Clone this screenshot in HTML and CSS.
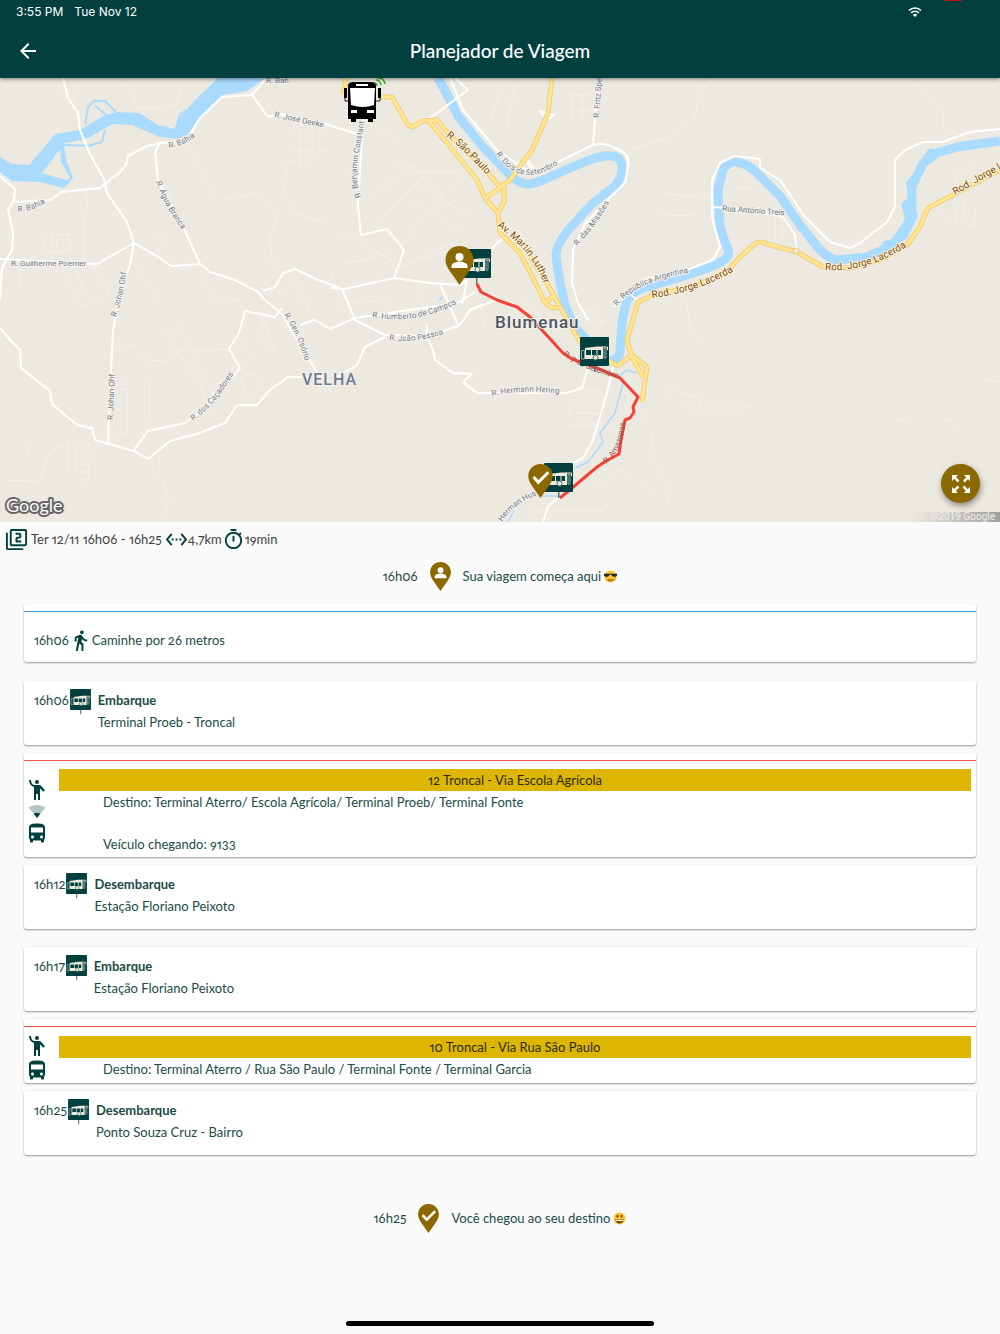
FILE: index.html
```html
<!DOCTYPE html>
<html lang="pt-BR">
<head>
    <meta charset="UTF-8">
    <meta name="viewport" content="width=device-width, initial-scale=1.0">
    <title>Planejador de Viagem</title>
    <link rel="stylesheet" href="styles.css">
</head>
<body>
    <svg class="sprite" aria-hidden="true">
        <symbol id="stop" viewBox="0 0 29 36">
            <path d="M14 28h1.500v7h-1.500z" fill="#5c7472"/>
            <rect width="29" height="29" rx="1" fill="#024040"/>
            <path d="M5 11L17 9.500H23V22H5z" fill="#eeeade"/>
            <path d="M6 13h5v5H6zM12 13h4.500v5H12zM17.500 13H21v5h-3.500z" fill="#024040"/>
            <path d="M1.500 13.500H4.500v8.500H1.500zM24 11.500h2v9.500h-2z" fill="#024040" stroke="#b9c4bc" stroke-width=".8"/>
            <path d="M22 10h5.500v3" fill="none" stroke="#eeeade"/>
            <circle cx="15.500" cy="20.500" r="2.500" fill="#eeeade" stroke="#49716d"/>
        </symbol>
        <symbol id="pin-person" viewBox="0 0 28 39">
            <path d="M14 0C6 0 0 6 0 14c0 8 8 15 14 25 6-10 14-17 14-25C28 6 22 0 14 0z" fill="#8b6800"/>
            <circle cx="14" cy="11" r="4" fill="#fff"/>
            <path d="M6 22v-2c0-3 5-4.500 8-4.500s8 1.500 8 4.500v2z" fill="#fff"/>
        </symbol>
        <symbol id="pin-check" viewBox="0 0 28 39">
            <path d="M14 0C6 0 0 6 0 14c0 8 8 15 14 25 6-10 14-17 14-25C28 6 22 0 14 0z" fill="#8b6800"/>
            <path d="M6 15l5.500 6L23 9.500" fill="none" stroke="#fff" stroke-width="3.500"/>
        </symbol>
        <symbol id="hail" viewBox="0 0 16 20">
            <circle cx="8" cy="2" r="2"/>
            <path d="M0 0h2c0 3 1.500 5 4 5h4c1 0 1.500.3 2 .8l4 4.500-1.500 1.400L11 8.500V20H9v-6H7v6H5V7C2 6 0 3.500 0 0z"/>
        </symbol>
        <symbol id="signal" viewBox="0 0 18 14">
            <path d="M0 3C5-1 13-1 18 3L9 14z" opacity=".3"/>
            <path d="M5.500 9.500c2-1.700 5-1.700 7 0L9 14z"/>
        </symbol>
        <symbol id="bus" viewBox="4 2 16 19">
            <path d="M4 16c0 .88.39 1.670 1 2.220V20c0 .55.45 1 1 1h1c.55 0 1-.45 1-1v-1h8v1c0 .55.45 1 1 1h1c.55 0 1-.45 1-1v-1.780c.61-.55 1-1.340 1-2.220V6c0-3.500-3.580-4-8-4s-8 .5-8 4v10zm3.500 1c-.83 0-1.500-.67-1.500-1.500S6.670 14 7.500 14s1.500.67 1.500 1.500S8.330 17 7.500 17zm9 0c-.83 0-1.500-.67-1.500-1.500s.67-1.500 1.500-1.500 1.500.67 1.500 1.500-.67 1.500-1.500 1.500zm1.500-6H6V6h12v5z"/>
        </symbol>
    </svg>

    <header class="app-bar">
        <div class="status">
            <span>3:55 PM</span>
            <span>Tue Nov 12</span>
            <svg class="wifi" viewBox="0 0 14 10" aria-hidden="true">
                <path d="M1 3.500a8.500 8.500 0 0 1 12 0M3.200 5.800a5.400 5.400 0 0 1 7.600 0" fill="none" stroke="#fff" stroke-width="1.700"/>
                <path d="M7 10L4.800 7.700a3.200 3.200 0 0 1 4.400 0z" fill="#fff"/>
            </svg>
            <i class="recording"></i>
        </div>
        <div class="toolbar">
            <button class="back" type="button" aria-label="Voltar">
                <svg viewBox="0 0 24 24"><path d="M20 11H7.830l5.590-5.590L12 4l-8 8 8 8 1.410-1.410L7.830 13H20v-2z"/></svg>
            </button>
            <h1>Planejador de Viagem</h1>
        </div>
    </header>

    <section class="map" aria-label="Mapa">
        <svg class="map-canvas" viewBox="0 78 1000 444">
            <defs>
                <path id="l-bahia1" d="M18 212Q32 211 45 203"/>
                <path id="l-bahia2" d="M169 148Q184 146 197 135"/>
                <path id="l-agua" d="M156 182Q164 205 183 231"/>
                <path id="l-ben" d="M361 197C352 172 359 160 364 122"/>
                <path id="l-osorio" d="M284 315Q298 335 306 364"/>
                <path id="l-cac" d="M193 421Q215 405 233 375"/>
                <path id="l-hum" d="M372 317Q415 326 462 301"/>
                <path id="l-joao" d="M389 340Q415 344 450 332"/>
                <path id="l-johan" d="M116 317Q122 300 127 270"/>
                <path id="l-paulo" d="M446 136Q468 153 490 179"/>
                <path id="l-luther" d="M497 226Q536 254 546 290"/>
                <path id="l-dois" d="M496 154Q523 194 566 158"/>
                <path id="l-miss" d="M577 246Q597 225 610 201"/>
                <path id="l-rep" d="M617 306Q636 281 693 272"/>
                <path id="l-rod1" d="M652 298Q702 292 742 266"/>
                <path id="l-rod2" d="M825 270Q870 273 915 241"/>
                <path id="l-rod3" d="M955 195L1008 165"/>
                <path id="l-herm" d="M492 396Q530 388 565 395"/>
                <path id="l-sete" d="M563 355Q585 372 630 381"/>
                <path id="l-amaz" d="M606 464Q624 450 625 419"/>
                <path id="l-hus" d="M502 522Q514 502 545 492"/>
            </defs>
            <rect y="78" width="1000" height="444" fill="#ece9e0"/>

            <!-- side streets -->
            <g class="lane">
                <path d="M56 78l4 12 6 1M72 84l3 10-2 8M117 80l17 15 2 13 20 1 20-5 5-14M85 190l3 17-3 8v60M45 236v16h24v-18l-17 1v17M57 235v16M66 240h5v12M190 145l20 43 10 13 35-8 20 18 0 14-6 12 4 30M286 130l35-10-3 35-30 8-5 30 12 20 30 10M300 118v50M312 122v40M290 150h38M320 155l-20 15M150 236l12-4 4 10-8 9-6-5"/>
                <path d="M60 265l22 42 28-14-20-30M70 258l20 44M20 268v20M130 258l30 45M198 266l18 38 10-6 15 4 8 10M290 275l22 40M278 292l28-10M300 270l15 12M330 270l10 30M166 332l14-5 25 49-9 6zM114 349l20-5 14 17 20-1 12-10 20 1 30-2M238 337l14 22M262 316l5 15 8 18-6 3-8-10zM190 360l24 60M196 358l22 46M115 384h12v50h-13M120 390h7M118 400h9M118 410h9M145 382v36M149 382v36M240 378l15-5 7 16-16 5z"/>
                <path d="M0 480l39 1 8-24 10-10 30-6M25 435l4 20M68 440v32h20v-30M75 442v31M80 464h9v16h-9M148 460l12 16 9 20-3 12-6 14M160 450l-1 22"/>
                <path d="M395 160l25 12 40 0M370 200l40-35 40 40M380 220l42-42M400 245l60-70M410 200l50 30M420 185l55 35M365 245l35 20 50-20M390 270l60-20M340 235l30 10M345 110l55 30M350 80l50 25M500 90l-10 30M515 85l-8 40M570 95h20M570 110h22M572 95v24M582 95v24M558 185l30 10 12-10M630 150l35-12 30-20 2-15 6-15 8-5-2-5M910 80l20 20 14 12-1 14 17 10M955 186l2-15 18-7M938 210l14 12 22 4 2-22M955 205v18M965 200v22M660 192l50 7M660 215l40 1M728 178l10-6 12 6v10h-15M775 218v22M782 218v22M730 230l10 20"/>
                <path d="M687 300l2 25 10 15 8 8M660 380l20 12 21 6v9M661 389l24 19h60l10-3M640 410l12 25-2 20 20 35-2 15M600 390h-20l-12 25 60 20M570 400h38M568 413h35M567 425h30M535 510h70l5-12M530 505v14h20v-14M590 490l30-20 35 20M895 420l14 2M940 420l12 1 1 8M985 380l15 2M970 490l20-20"/>
                <path d="M520 300l20 15 10 22 20 20M565 325l30-20M572 332l30-22M580 340l25-20M590 310l15 15M588 320l14 14M340 305l40-5 20 8M340 265l50-12M400 320l12 16M420 292l5 25M480 305l5 20"/>
            </g>

            <!-- rivers -->
            <g class="water">
                <path class="solid" d="M0 157L12 164L29 165L41 151L55 134L80 130L90 124L105 115L117 112L139 113L158 125L174 129L180 117L195 100L214 82L217 78H265L247 91L222 95L211 106L196 122L188 135L178 139L160 137L132 125L112 124L90 137L82 140L65 143L57 153L42 173L66 180L70 178L61 162L60 145H64L66 160L73 178L64 188L40 182L12 181L0 172z"/>
                <path class="creek" d="M85 124L88 107L94 101L105 101L116 112M95 106L108 116M64 145L88 146L102 142L105 130M177 125L180 114L187 110" stroke-width="2"/>
                <path d="M438 78L450 100L458 116L483 147L508 173Q519 184 527 184Q535 184 543 180L577 165Q595 157 605 156Q617 155 620 160Q626 172 615 186L593 203L570 228Q556 245 556 256L560 283L566 308L575 328L587 340L607 361Q620 361 620 351L622 323L625 307Q628 294 641 289L687 275L710 267Q731 259 728 250L720 227L718 190L723 170Q728 160 737 162Q748 164 757 173L780 196L800 225L820 250Q829 259 837 260L867 257L893 245L908 223L912 207L912 187L923 163L937 153L957 147L1000 141" stroke-width="9"/>
                <path class="solid" d="M906 183L916 170L927 150L934 148V156L925 168L919 177L913 198L918 216L907 238L885 253L882 242L898 237L905 217L901 204L909 197z"/>
                <path class="creek" d="M623 383L615 413L600 433L603 442L588 462L575 468M618 378L626 370L636 373M514 511L508 522M560 496l-18 0" stroke-width="1.500"/>
            </g>

            <!-- local roads -->
            <g class="road">
                <path stroke-width="3" d="M63 78L68 98L78 113L80 130L90 154L104 179"/>
                <path d="M104 179L107 193L127 222L134 243L160 258L171 266L201 264M0 176L15 189L14 200L8 210L13 232L12 250L2 268L0 300M14 202L50 200L62 192L100 188L111 179L119 173L126 165L128 156L147 146L160 143L185 142L200 118L222 97L252 95L265 80M252 95L268 117L280 114L325 124L358 134M160 143L155 152L158 180L186 233L200 264L210 272L235 280L258 292L265 300L282 314L300 345L317 372"/>
                <path d="M0 259L97 264L134 243L130 265L121 290L113 330L110 390L108 445M0 328L10 340L20 350L21 368L50 391L52 404L77 425L92 428L95 440L134 451L148 459L170 441L200 433L225 423L237 405L257 405L270 390L288 377L310 377M134 450L148 431L185 423L215 400L240 368L229 349L239 333L245 311L275 317L282 308M263 291L275 287L283 273L295 269L318 280L340 288M300 325L315 320L330 329L355 318L457 303L475 292"/>
                <path d="M363 118L358 205L361 235L387 229L404 250L394 278L430 283L460 285L467 280M330 288L345 289L394 278M342 289L355 320L385 335L430 336L460 325L470 310L495 300M440 284L458 325M366 92L363 120M490 250L503 238M467 281L462 303M385 337L365 347L357 365L335 378M450 78L463 110L497 150L530 172L558 162L593 145Q605 142 615 148Q631 154 628 166L625 183L607 200L585 224L573 250L572 283L578 303L588 320M598 78L593 145M455 78L468 90L430 118M548 113l-8-2 4 6zM548 113l6 2-5 4zM528 160l7 10 M524 158l8 12"/>
                <path d="M613 307L645 279L687 270L713 260L720 247L712 217L712 180L720 163L735 156L760 159L760 168L780 180L805 217L830 242L850 248L860 243L887 222L895 207V160L905 150L923 142L943 142L970 132L1000 129M712 207L745 209L783 217L795 235L797 250M427 325V337L433 350L435 360L453 373L472 374L463 382L477 393H567L582 388L588 368M613 367L607 393L593 440L583 458L570 465M500 522Q512 503 530 495M560 497L548 506L543 522M631 295L638 300"/>
            </g>

            <!-- highways: casing and fill -->
            <g class="highway casing">
                <use href="#hw"/>
            </g>
            <g class="highway">
                <path id="hw" d="M380 97H392L408 125L413 127L422 121L437 120L445 130L488 173L500 187L510 180L532 150L548 113L552 78M428 120L457 155L477 180L485 198L498 213L504 202V187M485 198L503 186M498 213L500 233L520 253L535 282L545 303L552 308L560 307M530 257L547 283L560 307L580 342L617 366L632 355L647 367L642 402M545 303L554 295M660 292L638 302L627 340L632 357L643 377M652 294L690 288L727 272L740 257L755 244Q760 240 767 244L797 252L823 267L850 268L880 260L907 245L920 227L928 208L953 195L1000 170M346 78L343 94"/>
            </g>
            <circle cx="796" cy="251" r="3" fill="#ece9e0" stroke="#f3c95d"/>
            <path d="M438 300l4-4v4z" fill="#a9daff"/>

            <path class="route" d="M477 284L481 292L497 300L517 307L530 317L563 353L572 359L597 368L620 378L638 397L633 407L634 412L630 418L625 420L621 440L619 454L606 461L597 467L572 488L560 498"/>

            <g class="label">
                <text><textPath href="#l-bahia1">R. Bahia</textPath></text>
                <text><textPath href="#l-bahia2">R. Bahia</textPath></text>
                <text x="266" y="83">R. Bah</text>
                <text transform="translate(274 117) rotate(12)">R. José Deeke</text>
                <text><textPath href="#l-agua">R. Água Branca</textPath></text>
                <text x="11" y="266">R. Guilherme Poerner</text>
                <text><textPath href="#l-johan">R. Johan Ohf</textPath></text>
                <text transform="translate(113 420) rotate(-88)">R. Johan Ohf</text>
                <text><textPath href="#l-osorio">R. Gen. Osório</textPath></text>
                <text><textPath href="#l-cac">R. dos Caçadores</textPath></text>
                <text><textPath href="#l-ben">R. Benjamin Constant</textPath></text>
                <text><textPath href="#l-hum">R. Humberto de Campos</textPath></text>
                <text><textPath href="#l-joao">R. João Pessoa</textPath></text>
                <text><textPath href="#l-dois">R. Dois de Setembro</textPath></text>
                <text transform="translate(599 118) rotate(-86)">R. Fritz Spe</text>
                <text><textPath href="#l-miss">R. das Missões</textPath></text>
                <text><textPath href="#l-rep">R. República Argentina</textPath></text>
                <text transform="translate(722 211) rotate(4)">Rua Antônio Treis</text>
                <text><textPath href="#l-herm">R. Hermann Hering</textPath></text>
                <text class="on-route"><textPath href="#l-sete">R. 7 de Setembro</textPath></text>
                <text class="on-route"><textPath href="#l-amaz">R. Amazonas</textPath></text>
                <text><textPath href="#l-hus">Herman Hus</textPath></text>
            </g>
            <g class="label label-highway">
                <text><textPath href="#l-paulo">R. São Paulo</textPath></text>
                <text><textPath href="#l-luther">Av. Martin Luther</textPath></text>
                <text><textPath href="#l-rod1">Rod. Jorge Lacerda</textPath></text>
                <text><textPath href="#l-rod2">Rod. Jorge Lacerda</textPath></text>
                <text><textPath href="#l-rod3">Rod. Jorge L</textPath></text>
            </g>
            <text class="place" x="495" y="328">Blumenau</text>
            <text class="place district" x="302" y="385">VELHA</text>

            <!-- live vehicle -->
            <g fill="#000">
                <path d="M376 80q4 0 5 5M378 78q6 0 7 6M374 83q3 0 3 3" fill="none" stroke="#3fae2a" stroke-width="1.500"/>
                <path d="M344 88h3v10h-3zM378 88h3v10h-3z"/>
                <path d="M345 97v4h4M380 97v4h-4" fill="none" stroke="#222"/>
                <path d="M348 86q0-4 5-4h18q5 0 5 4v33h-3v3h-5v-3h-12v3h-5v-3h-3z"/>
                <path d="M350 88h25l-1 17q-11 4-23 0z" fill="#fff"/>
                <path d="M356 84h12v2h-12zM351 110h6v3h-6zM367 110h7v3h-7z" fill="#fff"/>
            </g>

            <use href="#stop" x="462" y="249" width="29" height="36"/>
            <use href="#pin-person" x="445" y="246" width="29" height="39"/>
            <use href="#stop" x="580" y="337" width="29" height="36"/>
            <use href="#stop" x="544" y="463" width="29" height="36"/>
            <use href="#pin-check" x="528" y="464" width="25" height="34"/>

            <text class="google" x="6" y="512">Google</text>
        </svg>
        <span class="copyright">©2019 Google</span>
        <button class="expand" type="button" aria-label="Expandir mapa">
            <svg viewBox="0 0 24 24"><path d="M15 3l2.300 2.300-3.300 3.300 1.800 1.800L19 7.100 21 9V3zM3 9l2.300-2.300 3.300 3.700 1.800-1.800L7.100 5 9 3H3zM9 21l-2.300-2.300 3.700-3.300-1.800-1.800L5 16.900 3 15v6zM21 15l-2.300 2.300-3.300-3.700-1.800 1.800 3.300 3.300L15 21h6z"/></svg>
        </button>
    </section>

    <main>
        <div class="summary">
            <svg class="icon-lg" viewBox="0 0 24 24"><path d="M3 5H1v16c0 1.100.9 2 2 2h16v-2H3V5zm18-4H7c-1.100 0-2 .9-2 2v14c0 1.100.9 2 2 2h14c1.100 0 2-.9 2-2V3c0-1.100-.9-2-2-2zm0 16H7V3h14v14zm-4-4h-4v-2h2c1.100 0 2-.89 2-2V7c0-1.110-.9-2-2-2h-4v2h4v2h-2c-1.100 0-2 .89-2 2v4h6v-2z"/></svg>
            <span class="when">Ter 12/11 16h06 - 16h25</span>
            <svg class="icon-lg" viewBox="0 0 24 24"><path d="M7.770 6.760L6.230 5.480.82 12l5.410 6.520 1.540-1.280L3.420 12l4.350-5.240zM7 13h2v-2H7v2zm10-2h-2v2h2v-2zm-6 2h2v-2h-2v2zm6.770-7.520l-1.540 1.280L20.580 12l-4.350 5.240 1.540 1.280L23.180 12l-5.410-6.520z"/></svg>
            <span>4,7km</span>
            <svg class="icon-lg" viewBox="0 0 24 24"><path d="M15 1H9v2h6V1zm-4 13h2V8h-2v6zm8.030-6.610l1.420-1.420c-.43-.51-.9-.99-1.410-1.410l-1.420 1.420C16.070 4.740 14.120 4 12 4c-4.970 0-9 4.030-9 9s4.020 9 9 9 9-4.030 9-9c0-2.120-.74-4.070-1.970-5.610zM12 20c-3.870 0-7-3.130-7-7s3.130-7 7-7 7 3.130 7 7-3.130 7-7 7z"/></svg>
            <span>19min</span>
        </div>

        <div class="endpoint">
            <span>16h06</span>
            <svg class="pin"><use href="#pin-person"/></svg>
            <span class="note">Sua viagem começa aqui
                <svg class="emoji" viewBox="0 0 14 14" role="img" aria-label="óculos de sol">
                    <circle cx="7" cy="7" r="6.500" fill="#fcc52e"/>
                    <path d="M1 9a6.500 6.500 0 0 0 12 0q-6 4-12 0z" fill="#f39b25"/>
                    <path d="M0 4h14v1c0 3-5 3-6 0H6c-1 3-6 3-6 0z" fill="#25272b"/>
                    <path d="M4 10q3 2 6 0" fill="none" stroke="#7d4b16"/>
                </svg>
            </span>
        </div>

        <ol class="steps">
            <li class="card walk">
                <div class="walk-row">
                    <span>16h06</span>
                    <svg class="icon-walk" viewBox="0 0 24 24"><path d="M13.500 5.500c1.100 0 2-.9 2-2s-.9-2-2-2-2 .9-2 2 .9 2 2 2zM9.800 8.900L7 23h2.100l1.800-8 2.100 2v6h2v-7.500l-2.100-2 .6-3C14.800 12 16.800 13 19 13v-2c-1.900 0-3.500-1-4.300-2.400l-1-1.600c-.4-.6-1-1-1.700-1-.3 0-.5.1-.8.1L6 8.300V13h2V9.600l1.800-.7"/></svg>
                    <span>Caminhe por 26 metros</span>
                </div>
            </li>
            <li class="card stop">
                <time>16h06</time>
                <svg class="icon-stop"><use href="#stop"/></svg>
                <div>
                    <h2>Embarque</h2>
                    <p>Terminal Proeb - Troncal</p>
                </div>
            </li>
            <li class="card ride live">
                <div class="ride-icons">
                    <svg class="icon-ride"><use href="#hail"/></svg>
                    <svg class="icon-signal"><use href="#signal"/></svg>
                    <svg class="icon-ride"><use href="#bus"/></svg>
                </div>
                <div class="ride-body">
                    <h2 class="line">12 Troncal - Via Escola Agrícola</h2>
                    <p>Destino: Terminal Aterro/ Escola Agrícola/ Terminal Proeb/ Terminal Fonte</p>
                    <p class="vehicle">Veículo chegando: 9133</p>
                </div>
            </li>
            <li class="card stop">
                <time>16h12</time>
                <svg class="icon-stop"><use href="#stop"/></svg>
                <div>
                    <h2>Desembarque</h2>
                    <p>Estação Floriano Peixoto</p>
                </div>
            </li>
            <li class="card stop boarding">
                <time>16h17</time>
                <svg class="icon-stop"><use href="#stop"/></svg>
                <div>
                    <h2>Embarque</h2>
                    <p>Estação Floriano Peixoto</p>
                </div>
            </li>
            <li class="card ride">
                <div class="ride-icons">
                    <svg class="icon-ride"><use href="#hail"/></svg>
                    <svg class="icon-ride"><use href="#bus"/></svg>
                </div>
                <div class="ride-body">
                    <h2 class="line">10 Troncal - Via Rua São Paulo</h2>
                    <p>Destino: Terminal Aterro / Rua São Paulo / Terminal Fonte / Terminal Garcia</p>
                </div>
            </li>
            <li class="card stop">
                <time>16h25</time>
                <svg class="icon-stop"><use href="#stop"/></svg>
                <div>
                    <h2>Desembarque</h2>
                    <p>Ponto Souza Cruz - Bairro</p>
                </div>
            </li>
        </ol>

        <div class="endpoint arrival">
            <span>16h25</span>
            <svg class="pin"><use href="#pin-check"/></svg>
            <span class="note">Você chegou ao seu destino
                <svg class="emoji" viewBox="0 0 14 14" role="img" aria-label="sorriso">
                    <circle cx="7" cy="7" r="6.500" fill="#fcc52e"/>
                    <ellipse cx="4.800" cy="4.500" rx="1" ry="1.600" fill="#6b4015"/>
                    <ellipse cx="9.200" cy="4.500" rx="1" ry="1.600" fill="#6b4015"/>
                    <path d="M2.500 7.500q4.500 1.500 9 0-.5 5-4.500 5t-4.500-5z" fill="#7d4b16"/>
                    <path d="M3 8q4 1.200 8 0v1.300q-4 1-8 0z" fill="#fff"/>
                </svg>
            </span>
        </div>
    </main>
    <div class="home-bar"></div>
</body>
</html>
```
FILE: styles.css
```css
* { margin: 0; padding: 0; box-sizing: border-box; }
body {
    font-family: Lato, "Open Sans", sans-serif;
    font-size: 13px;
    font-variant-numeric: proportional-nums oldstyle-nums;
    line-height: 22px;
    background: #fafafa;
    color: #1d4a47;
    display: flex;
    flex-direction: column;
    min-height: 100vh;
}
svg {
    display: block;
    flex: none;
    fill: #024040;
}
h1, h2 {
    font-size: inherit;
}
.sprite {
    position: absolute;
    width: 0;
    height: 0;
}

/* top bar */
.app-bar {
    position: relative;
    z-index: 1;
    background: #024040;
    color: #fff;
    box-shadow: 0 1px 4px rgba(0, 0, 0, 0.5);
}
.status {
    position: relative;
    display: flex;
    align-items: center;
    gap: 11px;
    height: 24px;
    padding: 0 78px 0 16px;
    font-family: Inter, sans-serif;
    font-size: 12px;
    font-variant-numeric: normal;
}
.wifi {
    width: 14px;
    height: 10px;
    margin-left: auto;
}
.recording {
    position: absolute;
    top: 0;
    right: 38px;
    width: 17px;
    height: 1px;
    background: #c00d0d;
}
.toolbar {
    display: grid;
    grid-template-columns: 56px 1fr 56px;
    align-items: center;
    height: 54px;
}
.toolbar h1 {
    font-size: 19px;
    font-weight: 500;
    text-align: center;
}
button {
    border: none;
    cursor: pointer;
}
.back {
    justify-self: center;
    background: none;
}
.back svg {
    width: 24px;
    height: 24px;
    fill: #fff;
}

/* map */
.map {
    position: relative;
    overflow: hidden;
}
.map-canvas {
    width: 100%;
}
.lane {
    fill: none;
    stroke: #f3f1eb;
}
.water path {
    fill: none;
    stroke: #a9daff;
    stroke-linejoin: round;
}
.water .solid {
    fill: #a9daff;
    stroke: none;
}
.road path {
    fill: none;
    stroke: #fff;
    stroke-width: 2;
    stroke-linejoin: round;
}
.highway {
    fill: none;
    stroke: #ffe592;
    stroke-width: 3;
    stroke-linejoin: round;
}
.casing {
    stroke: #f3cf72;
    stroke-width: 5;
}
.route {
    fill: none;
    stroke: #f44336;
    stroke-width: 3;
    stroke-linejoin: round;
}
.label {
    font-family: Roboto, sans-serif;
    font-size: 8px;
    fill: #6f7a86;
    stroke: #f4f2ec;
    stroke-width: 2;
    paint-order: stroke;
}
.on-route {
    fill: #9b5552;
    stroke: none;
}
.label-highway {
    font-size: 10px;
    fill: #7a4a1e;
    stroke: #fdf3d3;
}
.place {
    font-family: Roboto, sans-serif;
    font-size: 17px;
    font-weight: 500;
    letter-spacing: 1px;
    fill: #4d5560;
    stroke: #f4f2ec;
    stroke-width: 2;
    paint-order: stroke;
}
.district {
    font-size: 16px;
    fill: #6d7a8f;
}
.google {
    font-family: Lato, sans-serif;
    font-size: 18px;
    fill: #fff;
    stroke: #666;
    stroke-width: 4;
    stroke-linejoin: round;
    paint-order: stroke;
}
.copyright {
    position: absolute;
    right: 0;
    bottom: 0;
    padding: 0 5px 0 18px;
    font-family: Roboto, sans-serif;
    font-size: 10px;
    font-variant-numeric: normal;
    line-height: 10px;
    color: #eee;
    background: linear-gradient(90deg, transparent, #a3a19d);
}
.expand {
    position: absolute;
    right: 20px;
    bottom: 19px;
    display: grid;
    place-items: center;
    width: 39px;
    height: 39px;
    border-radius: 50%;
    background: #8b6800;
    box-shadow: 1px 3px 6px rgba(0, 0, 0, 0.4);
}
.expand svg {
    width: 24px;
    height: 24px;
    fill: #fff;
}

/* trip */
.summary {
    display: flex;
    align-items: center;
    height: 34px;
    padding-left: 5px;
    color: #424242;
}
.icon-lg {
    width: 23px;
    height: 23px;
}
.when {
    padding: 0 3px;
}
.endpoint {
    display: flex;
    justify-content: center;
    align-items: center;
    gap: 12px;
    height: 40px;
}
.pin {
    width: 21px;
    height: 29px;
}
.note {
    display: flex;
    align-items: center;
    gap: 3px;
}
.emoji {
    width: 13px;
    height: 13px;
}
.steps {
    list-style: none;
    padding: 8px 24px 0;
}
.card {
    margin-bottom: 8px;
    background: #fff;
    border-radius: 3px;
    box-shadow: 0 1px 2px rgba(0, 0, 0, 0.4);
}
.walk {
    margin-bottom: 19px;
    padding-top: 7px;
}
.walk-row {
    display: flex;
    align-items: center;
    height: 51px;
    padding: 6px 10px 0;
    border-top: 1px solid #3d9ce0;
}
.icon-walk {
    width: 23px;
    height: 23px;
}
.stop {
    display: flex;
    gap: 1px;
    height: 64px;
    padding: 8px 10px;
}
.icon-stop {
    width: 21px;
    height: 26px;
    margin-right: 6px;
}
.boarding {
    margin-top: 18px;
}
.ride {
    position: relative;
    display: flex;
    padding: 17px 5px 3px 3px;
}
.ride::before {
    content: "";
    position: absolute;
    top: 7px;
    left: 0;
    right: 0;
    height: 1px;
    background: #f4574c;
}
.ride-icons {
    display: flex;
    flex-direction: column;
    align-items: center;
    gap: 4px;
    width: 20px;
}
.live {
    padding: 16px 5px 2px 3px;
}
.live .ride-icons {
    padding-top: 11px;
    gap: 5px;
}
.icon-ride {
    width: 16px;
    height: 20px;
}
.icon-signal {
    width: 18px;
    height: 13px;
}
.ride-body {
    flex: 1;
    margin-left: 12px;
}
.ride-body p {
    padding-left: 44px;
}
.line {
    height: 22px;
    font-weight: 400;
    text-align: center;
    background: #deb500;
    color: #2c2c14;
}
.ride-body .vehicle {
    padding-top: 20px;
}
.arrival {
    margin-top: 43px;
}

/* gesture bar */
.home-bar {
    width: 308px;
    height: 5px;
    margin: auto auto 8px;
    border-radius: 3px;
    background: #000;
}
```
